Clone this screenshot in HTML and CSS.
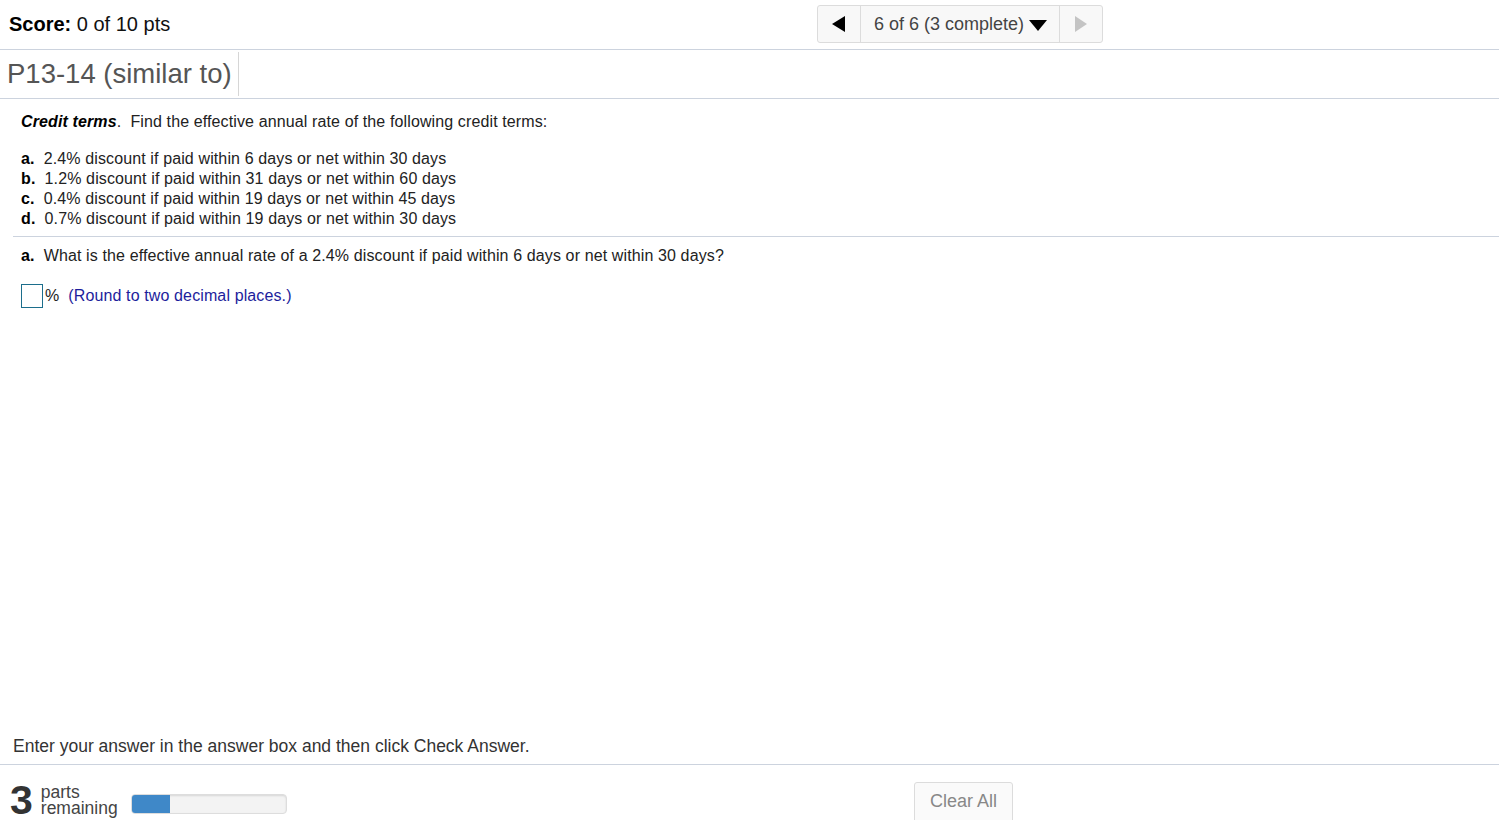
FILE: index.html
```html
<!DOCTYPE html>
<html>
<head>
<meta charset="utf-8">
<link rel="stylesheet" href="styles.css">
</head>
<body>
<div class="page">
  <header class="topbar">
    <div class="score"><b>Score:</b> 0 of 10 pts</div>
    <div class="nav">
      <div class="nav-btn">
        <svg width="14" height="16" viewBox="0 0 14 16"><polygon points="13,0 13,16 0,8" fill="#000"/></svg>
      </div>
      <div class="nav-mid">6 of 6 (3 complete)
        <svg class="caret" width="18" height="11" viewBox="0 0 18 11"><polygon points="0,0 18,0 9,11" fill="#000"/></svg>
      </div>
      <div class="nav-btn">
        <svg width="12" height="16" viewBox="0 0 12 16"><polygon points="0,0 0,16 12,8" fill="#c4c4c4"/></svg>
      </div>
    </div>
  </header>
  <div class="titlebar">
    <h1 class="title">P13-14 (similar to)</h1>
  </div>
  <main class="content">
    <p class="intro"><b><i>Credit terms</i></b>.&nbsp; Find the effective annual rate of the following credit terms:</p>
    <ul class="terms">
      <li><b>a.</b>&nbsp; 2.4% discount if paid within 6 days or net within 30 days</li>
      <li><b>b.</b>&nbsp; 1.2% discount if paid within 31 days or net within 60 days</li>
      <li><b>c.</b>&nbsp; 0.4% discount if paid within 19 days or net within 45 days</li>
      <li><b>d.</b>&nbsp; 0.7% discount if paid within 19 days or net within 30 days</li>
    </ul>
    <div class="question">
      <p class="qtext"><b>a.</b>&nbsp; What is the effective annual rate of a 2.4% discount if paid within 6 days or net within 30 days?</p>
      <div class="answer"><span class="box"></span><span class="pct">%</span><span class="hint">(Round to two decimal places.)</span></div>
    </div>
  </main>
  <div class="instruction">Enter your answer in the answer box and then click Check Answer.</div>
  <footer class="footer">
    <div class="parts">
      <span class="num">3</span>
      <span class="label">parts<br>remaining</span>
      <div class="progress"><div class="fill"></div></div>
    </div>
    <button class="clear">Clear All</button>
  </footer>
</div>
</body>
</html>
```
FILE: styles.css
```css
* { box-sizing: border-box; }
html, body { margin: 0; padding: 0; background: #fff; }
body { font-family: "Liberation Sans", Arial, sans-serif; color: #000; }
.page { width: 1499px; height: 820px; display: flex; flex-direction: column; overflow: hidden; }

.topbar {
  height: 50px;
  border-bottom: 1px solid #ccd3de;
  display: flex;
  align-items: flex-start;
  flex-shrink: 0;
}
.score { font-size: 20px; padding: 13px 0 0 9px; width: 817px; color: #111; }
.score b { color: #000; }
.nav {
  margin-top: 5px;
  height: 38px;
  display: flex;
  border: 1px solid #dcdcdc;
  border-radius: 3px;
  background: #f8f8f8;
}
.nav-btn { width: 42px; display: flex; align-items: center; justify-content: center; }
.nav-mid {
  width: 200px;
  border-left: 1px solid #dcdcdc;
  border-right: 1px solid #dcdcdc;
  display: flex; align-items: center; justify-content: center;
  font-size: 18px; color: #444; gap: 5px; padding-left: 1px;
}
.caret { margin-top: 2px; }

.titlebar {
  height: 49px;
  border-bottom: 1px solid #ccd3de;
  flex-shrink: 0;
  padding-top: 2px;
}
.title {
  margin: 0;
  display: inline-block;
  font-weight: normal;
  font-size: 27.5px;
  line-height: 44px;
  height: 44px;
  color: #555;
  padding: 0 6px 0 7px;
  border-right: 1px solid #d6d6d6;
}

.content { flex: 1; padding: 0 0 0 13px; font-size: 16px; color: #222; letter-spacing: 0.12px; }
.intro { margin: 13px 0 0 8px; line-height: 20px; color: #222; }
.intro b { color: #000; }
.terms { list-style: none; margin: 17px 0 0 8px; padding: 0; line-height: 20px; }
.terms b { color: #000; }
.question { border-top: 1px solid #ccd3de; margin-top: 7px; padding-left: 8px; }
.qtext { margin: 9px 0 0 0; line-height: 20px; }
.qtext b { color: #000; }
.answer { display: flex; align-items: center; margin-top: 18px; height: 24px; }
.box { width: 22px; height: 24px; border: 1px solid #1c6e8c; display: inline-block; }
.pct { margin-left: 2px; color: #222; }
.hint { color: #1d1d9c; margin-left: 9px; }

.instruction { font-size: 17.5px; color: #333; padding: 0 0 7px 13px; line-height: 22px; border-bottom: 1px solid #ccd3de; flex-shrink: 0; }
.footer { height: 55px; display: flex; align-items: flex-start; flex-shrink: 0; }
.parts { display: flex; align-items: center; width: 914px; padding: 17px 0 0 10px; }
.num { font-size: 41px; font-weight: bold; color: #333; line-height: 36px; }
.label { font-size: 17.5px; color: #444; line-height: 16px; margin-left: 8px; }
.progress {
  margin-left: 13px; margin-top: 8px;
  width: 156px; height: 20px;
  background: #f3f3f3; border: 1px solid #dddddd; border-radius: 4px;
  overflow: hidden;
  box-shadow: inset 0 1px 2px rgba(0,0,0,0.12);
}
.fill { width: 38px; height: 100%; background: #3f88c8; }
.clear {
  margin-top: 17px;
  width: 99px; height: 42px;
  font-family: "Liberation Sans", Arial, sans-serif;
  font-size: 18px; color: #888;
  background: #fafafa; border: 1px solid #dcdcdc; border-radius: 3px;
  padding: 0 0 4px 0;
}
```
